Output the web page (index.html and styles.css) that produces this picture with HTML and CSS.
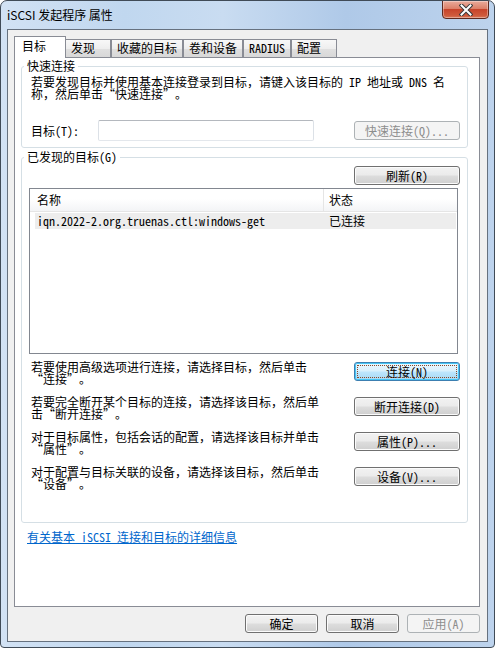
FILE: index.html
```html
<!DOCTYPE html>
<html lang="zh-CN">
<head>
  <meta charset="UTF-8">
  <title>iSCSI 发起程序 属性</title>
  <link rel="stylesheet" href="styles.css">
</head>
<body>
  <div class="window">
    <div class="titlebar">
      <span class="title">iSCSI 发起程序 属性</span>
      <div class="close-btn">
        <svg width="14" height="12" viewBox="0 0 14 12">
          <path d="M2.5 1.5 L11.5 10.5 M11.5 1.5 L2.5 10.5" stroke="#38383a" stroke-width="4" stroke-linecap="square"/>
          <path d="M2.5 1.5 L11.5 10.5 M11.5 1.5 L2.5 10.5" stroke="#fff" stroke-width="2" stroke-linecap="square"/>
        </svg>
      </div>
    </div>
    <div class="client">
      <div class="tabs">
        <div class="tab active">目标</div>
        <div class="tab">发现</div>
        <div class="tab">收藏的目标</div>
        <div class="tab">卷和设备</div>
        <div class="tab hw">RADIUS</div>
        <div class="tab">配置</div>
      </div>
      <div class="panel">
        <fieldset class="group">
          <legend>快速连接</legend>
          <p class="hint">若要发现目标并使用基本连接登录到目标，请键入该目标的<span class="hw"> IP </span>地址或<span class="hw"> DNS </span>名<br>称，然后单击<span class="ql">“</span>快速连接<span class="qr">”</span>。</p>
          <div class="target-row">
            <label class="target-label">目标<span class="hw">(T):</span></label>
            <input type="text" class="target-input">
            <button class="btn btn-side" disabled>快速连接<span class="hw">(Q)...</span></button>
          </div>
        </fieldset>
        <fieldset class="group discovered">
          <legend>已发现的目标<span class="hw">(G)</span></legend>
          <div class="refresh-row">
            <button class="btn btn-side">刷新<span class="hw">(R)</span></button>
          </div>
          <div class="listview">
            <div class="lv-header">
              <span class="lv-name">名称</span>
              <span class="lv-status">状态</span>
            </div>
            <div class="lv-row">
              <span class="lv-name hw">iqn.2022-2.org.truenas.ctl:windows-get</span>
              <span class="lv-status">已连接</span>
            </div>
          </div>
          <div class="actions">
            <div class="action">
              <p>若要使用高级选项进行连接，请选择目标，然后单击<br><span class="ql">“</span>连接<span class="qr">”</span>。</p>
              <button class="btn btn-side default">连接<span class="hw">(N)</span></button>
            </div>
            <div class="action">
              <p>若要完全断开某个目标的连接，请选择该目标，然后单<br>击<span class="ql">“</span>断开连接<span class="qr">”</span>。</p>
              <button class="btn btn-side">断开连接<span class="hw">(D)</span></button>
            </div>
            <div class="action">
              <p>对于目标属性，包括会话的配置，请选择该目标并单击<br><span class="ql">“</span>属性<span class="qr">”</span>。</p>
              <button class="btn btn-side">属性<span class="hw">(P)...</span></button>
            </div>
            <div class="action">
              <p>对于配置与目标关联的设备，请选择该目标，然后单击<br><span class="ql">“</span>设备<span class="qr">”</span>。</p>
              <button class="btn btn-side">设备<span class="hw">(V)...</span></button>
            </div>
          </div>
        </fieldset>
        <a class="help-link" href="#">有关基本<span class="hw"> iSCSI </span>连接和目标的详细信息</a>
      </div>
      <div class="dialog-buttons">
        <button class="btn btn-dlg">确定</button>
        <button class="btn btn-dlg">取消</button>
        <button class="btn btn-dlg" disabled>应用<span class="hw">(A)</span></button>
      </div>
    </div>
  </div>
</body>
</html>
```

FILE: styles.css
```css
* { box-sizing: border-box; }
body {
  margin: 0;
  background: #fff;
  color: #000;
  font: 12px/12px "Noto Sans CJK SC", "Noto Sans", sans-serif;
}
.hw { font-feature-settings: "hwid" 1; }
/* curly quotes take a full cell in the system font */
.ql, .qr {
  display: inline-block;
  width: 12px;
}
.ql { text-align: right; }
.qr { text-align: left; }
.window {
  width: 495px;
  height: 648px;
  border: 1px solid #404b57;
  border-radius: 7px 7px 4px 4px;
  padding: 0 6px 5px;
  display: flex;
  flex-direction: column;
  overflow: hidden;
  background: linear-gradient(to right, #d2e2f4 0%, #c0d7ef 25%, #c9dcf1 45%, #afc9e8 70%, #bdd3ed 100%);
}
.titlebar {
  height: 28px;
  display: flex;
  justify-content: space-between;
  align-items: center;
}
.title {
  font-size: 12px;
  line-height: 14px;
  margin-top: -1px;
}
.close-btn {
  align-self: flex-start;
  width: 47px;
  height: 19px;
  margin-top: -1px;
  margin-right: -1px;
  border: 1px solid #5e2a20;
  border-radius: 0 0 4px 4px;
  background: linear-gradient(#e9ab9b 0%, #dc8069 45%, #c7442b 50%, #cf5a3c 85%, #d9795b 100%);
  box-shadow: inset 0 0 0 1px rgba(255, 255, 255, 0.35);
  display: flex;
  justify-content: center;
  align-items: center;
}
.close-btn svg { display: block; }
.client {
  height: 613px;
  background: #f0f0f0;
  border: 1px solid #66717f;
  padding: 6px 7px 8px 6px;
  display: flex;
  flex-direction: column;
}

/* tabs */
.tabs {
  display: flex;
  align-items: flex-end;
  height: 21px;
  position: relative;
  z-index: 1;
}
.tab {
  height: 18px;
  min-width: 46px;
  padding: 2px 5px 0;
  border: 1px solid #898c95;
  border-bottom: 0;
  white-space: nowrap;
  background: linear-gradient(#f8f8f8 0%, #eeeeee 50%, #e0e0e0 52%, #d8d8d8 100%);
}
.tab.active {
  height: 22px;
  min-width: 52px;
  margin-bottom: -1px;
  margin-right: -1px;
  padding: 3px 7px 0;
  background: #fff;
  position: relative;
  z-index: 2;
}
.panel {
  height: 550px;
  border: 1px solid #898c95;
  background: #fff;
  padding: 2px 11px 0 6px;
}

/* group boxes */
.group {
  margin: 0;
  min-width: 0;
  border: 1px solid #d5dfe5;
  border-radius: 3px;
  padding: 0 7px 6px;
}
.group legend {
  padding: 0 3px;
  margin-left: -5px;
  line-height: 12px;
}
.discovered {
  margin-top: 3px;
  padding-bottom: 32px;
}
.hint {
  margin: 4px 0 0 2px;
  white-space: nowrap;
}
.target-row {
  display: flex;
  align-items: center;
  height: 21px;
  margin-top: 20px;
}
.target-label {
  width: 69px;
  padding-left: 2px;
}
.target-input {
  width: 216px;
  height: 21px;
  margin: 0;
  border: 1px solid;
  border-color: #b4b8be #dce1e7 #e3e7ec #dce1e7;
  border-radius: 2px;
  background: #fff;
}

/* buttons */
.btn {
  margin: 0;
  padding: 0;
  height: 19px;
  font: inherit;
  color: #000;
  border: 1px solid #707070;
  border-radius: 3px;
  background: linear-gradient(#f2f2f2 0%, #ebebeb 48%, #dddddd 52%, #cfcfcf 100%);
  box-shadow: inset 0 0 0 1px #fbfbfb;
  white-space: nowrap;
  position: relative;
}
.btn:disabled {
  color: #8d8d8d;
  border-color: #adb2b5;
  background: #f4f4f4;
  box-shadow: none;
}
.btn-side {
  width: 106px;
  margin-left: auto;
}
.btn-dlg { width: 73px; }
.btn.default {
  border-color: #3c7fb1;
  background: linear-gradient(#eaf6fd 0%, #d9f0fc 48%, #bee6fd 52%, #a7d9f5 100%);
  box-shadow: inset 0 0 0 1px #48c6f5;
}
.btn.default::after {
  content: "";
  position: absolute;
  inset: 2px;
  border: 1px dotted #8a4a2a;
}
.refresh-row {
  display: flex;
  margin-top: 3px;
}

/* list view */
.listview {
  height: 166px;
  margin: 3px 2px 0 0;
  border: 1px solid #828790;
  background: #fff;
}
.lv-header {
  display: flex;
  height: 23px;
  align-items: center;
  border-bottom: 1px solid #e5e5e5;
  background: linear-gradient(#ffffff 0%, #ffffff 45%, #f3f4f6 100%);
}
.lv-header .lv-name {
  width: 294px;
  height: 100%;
  padding: 5px 0 0 7px;
  border-right: 1px solid #e5e5e5;
}
.lv-header .lv-status { padding-left: 5px; }
.lv-row {
  display: flex;
  align-items: center;
  height: 16px;
  margin: 1px 1px 0 5px;
  background: #ededed;
}
.lv-row .lv-name {
  width: 288px;
  padding-left: 2px;
  white-space: nowrap;
}
.lv-row .lv-status { padding-left: 6px; }

/* action rows */
.actions { margin-top: 7px; }
.action {
  display: flex;
  align-items: flex-start;
  height: 24px;
  margin-bottom: 11px;
}
.action:last-child { margin-bottom: 0; }
.action p {
  margin: 0 0 0 2px;
  white-space: nowrap;
}
.action .btn { margin-top: 1px; }

.help-link {
  display: block;
  width: max-content;
  margin: 8px 0 0 6px;
  color: #0066cc;
  text-decoration: underline;
}
.dialog-buttons {
  display: flex;
  justify-content: flex-end;
  gap: 8px;
  margin-top: 7px;
}
```
